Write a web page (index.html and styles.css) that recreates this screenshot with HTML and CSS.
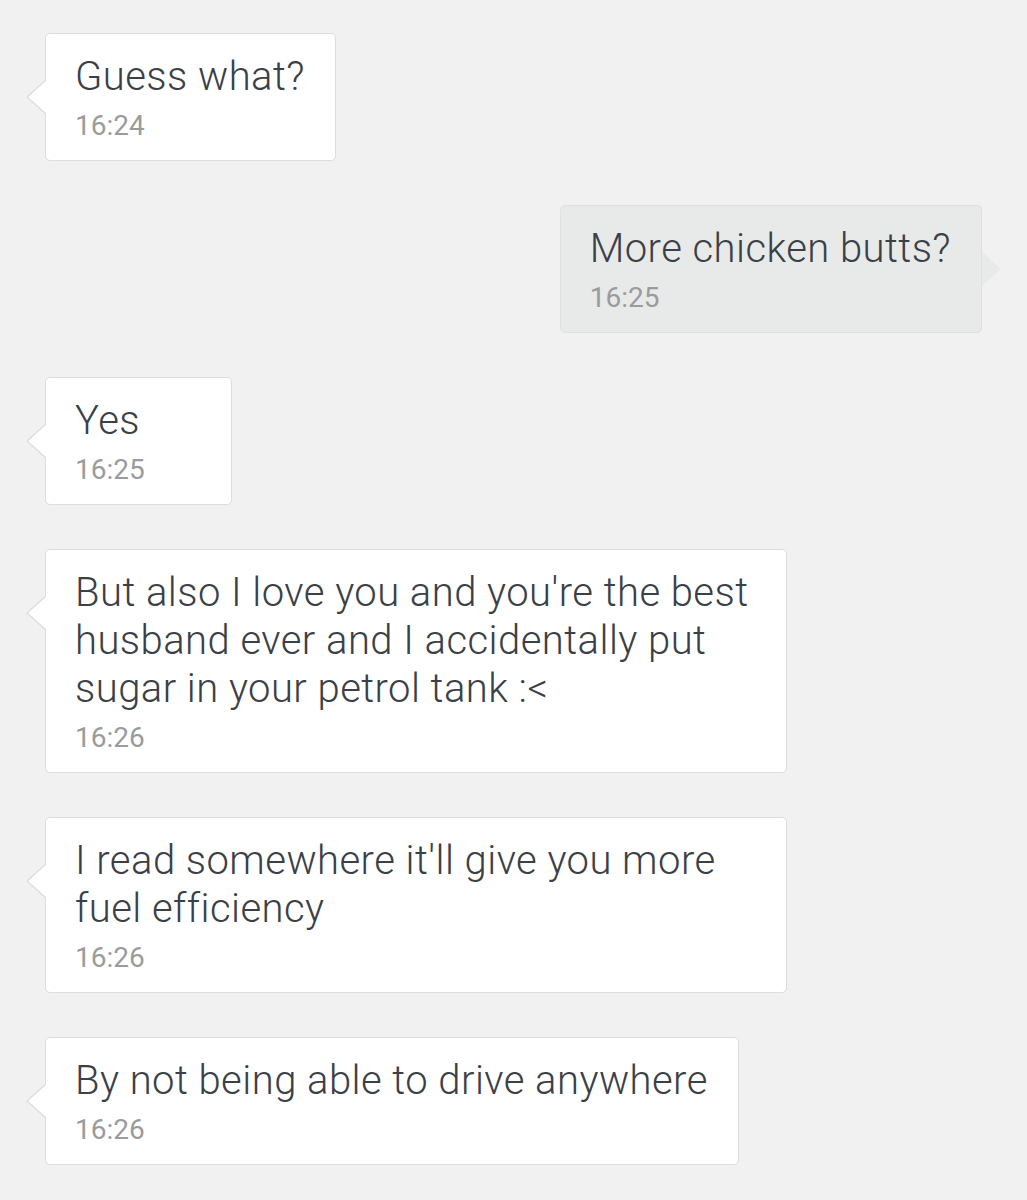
FILE: index.html
```html
<!DOCTYPE html>
<html>
<head>
    <title>Chat</title>
    <link rel="stylesheet" href="styles.css">
</head>
<body>
    <div class="thread">
        <div class="msg in">
            <div class="bubble">
                <div class="text">Guess what?</div>
                <div class="time">16:24</div>
            </div>
        </div>

        <div class="msg out">
            <div class="bubble">
                <div class="text">More chicken butts?</div>
                <div class="time">16:25</div>
            </div>
        </div>

        <div class="msg in">
            <div class="bubble">
                <div class="text">Yes</div>
                <div class="time">16:25</div>
            </div>
        </div>

        <div class="msg in">
            <div class="bubble">
                <div class="text">But also I love you and you're the best husband ever and I accidentally put sugar in your petrol tank :&lt;</div>
                <div class="time">16:26</div>
            </div>
        </div>

        <div class="msg in">
            <div class="bubble">
                <div class="text">I read somewhere it'll give you more fuel efficiency</div>
                <div class="time">16:26</div>
            </div>
        </div>

        <div class="msg in">
            <div class="bubble">
                <div class="text">By not being able to drive anywhere</div>
                <div class="time">16:26</div>
            </div>
        </div>
    </div>
</body>
</html>
```

FILE: styles.css
```css
body {
    margin: 0;
    background-color: #f0f1f0;
    font-family: Roboto, "Liberation Sans", sans-serif;
}
.thread {
    display: flex;
    flex-direction: column;
    gap: 44px;
    padding: 33px 45px 34px 45px;
}
.msg {
    display: flex;
}
.msg.out {
    justify-content: flex-end;
}
.bubble {
    position: relative;
    min-width: 126px;
    max-width: 681px;
    padding: 19px 30px 16px 29px;
    background-color: #fff;
    border: 1px solid #dcdddc;
    border-radius: 5px;
}
.out .bubble {
    background-color: #e8e9e9;
    border-color: #dfe0e0;
}
.text {
    font-size: 40px;
    font-weight: 300;
    line-height: 48px;
    letter-spacing: 0.45px;
    color: #3b4046;
}
.time {
    margin-top: 7px;
    font-size: 28px;
    line-height: 36px;
    color: #9a9b9c;
}

/* tails */
.bubble::before,
.bubble::after {
    content: "";
    position: absolute;
    top: 46px;
    border-top: 17px solid transparent;
    border-bottom: 17px solid transparent;
}
.in .bubble::before {
    left: -20px;
    border-right: 19px solid #dcdddc;
}
.in .bubble::after {
    left: -18px;
    border-right: 19px solid #fff;
}
.out .bubble::before {
    right: -20px;
    border-left: 19px solid #e8e9e9;
}
.out .bubble::after {
    display: none;
}
```
